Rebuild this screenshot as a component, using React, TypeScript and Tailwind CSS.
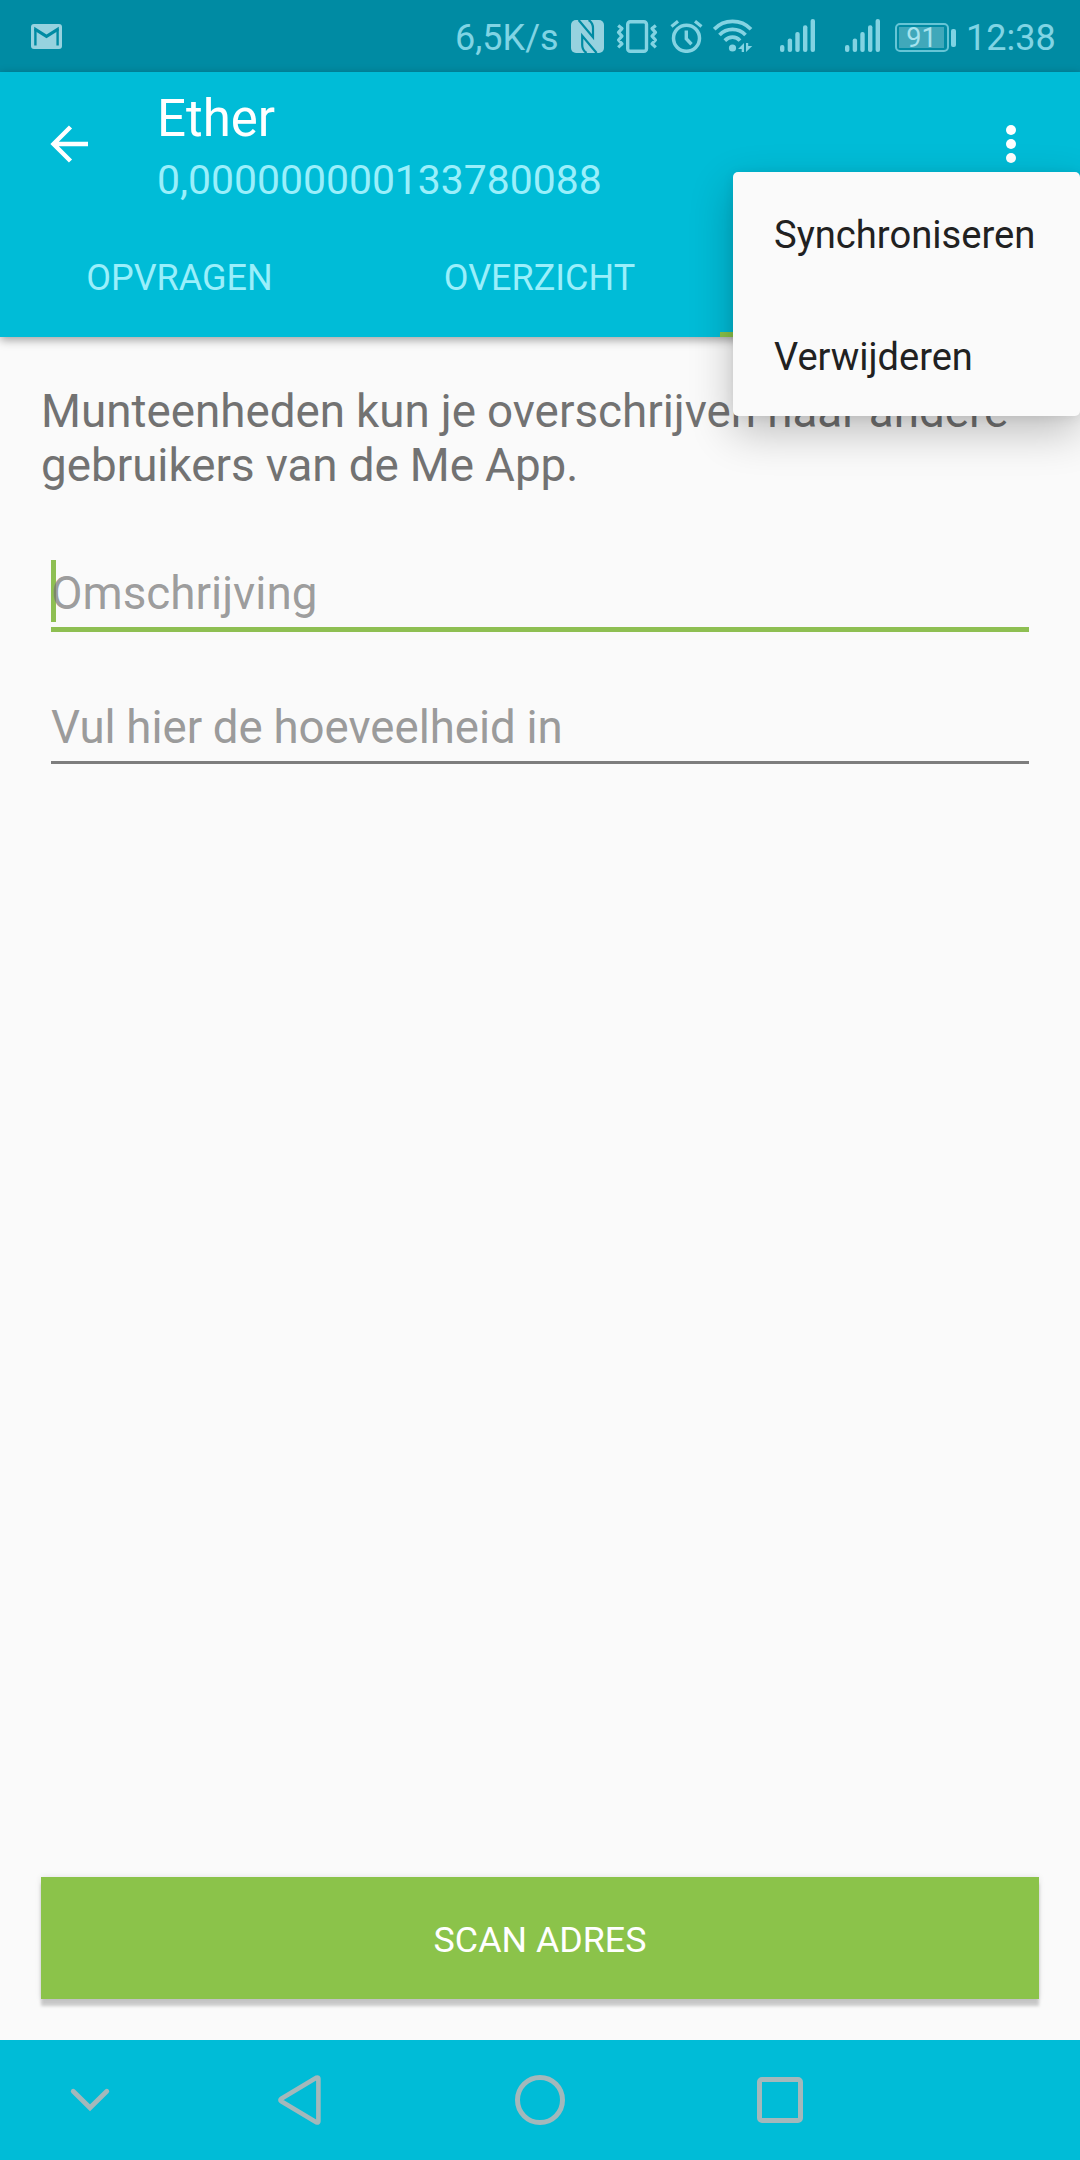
import React from "react";

const SIGNAL_BARS = [
  { x: 0, y: 26 },
  { x: 7.7, y: 19.5 },
  { x: 15.3, y: 13 },
  { x: 23, y: 6.2 },
  { x: 30.6, y: 0 },
];

function MailIcon() {
  return (
    <svg width="31" height="25" viewBox="0 0 31 25" className="shrink-0">
      <rect width="31" height="25" rx="3" fill="#96d2df" />
      <path d="M4.4 21.5V5M26.6 5V21.5" fill="none" stroke="#008ba3" strokeWidth="2.4" />
      <path d="M3.2 2.8L15.5 10.6 27.8 2.8V6.5L15.5 14.2 3.2 6.5z" fill="#008ba3" />
    </svg>
  );
}

function NfcIcon() {
  return (
    <svg width="33" height="33" viewBox="0 0 33 33" className="shrink-0">
      <rect width="33" height="33" rx="5" fill="#96d2df" />
      <path d="M7.6 0L22 17.2V8Q22 2.8 17.6 0M25.6 33L11.2 15.8V25Q11.2 30.2 15.6 33" fill="none" stroke="#008ba3" strokeWidth="2.2" />
    </svg>
  );
}

function VibrateIcon() {
  return (
    <svg width="42" height="33" viewBox="0 0 42 33" className="shrink-0" fill="none" stroke="#83d3e2">
      <rect x="11.7" y="1.7" width="18.8" height="29.6" rx="2.6" strokeWidth="3.4" />
      <path d="M2.2 5.5L6 8.6 2.5 12.4 6 16.2 2.5 20 6 23.8 2.2 27.4M39.8 5.5L36 8.6 39.5 12.4 36 16.2 39.5 20 36 23.8 39.8 27.4" strokeWidth="3.2" strokeLinejoin="round" />
    </svg>
  );
}

function AlarmIcon() {
  return (
    <svg width="33" height="33" viewBox="0 0 33 33" className="shrink-0" fill="none" stroke="#83d3e2">
      <circle cx="16.5" cy="18.3" r="13" strokeWidth="3.5" />
      <path d="M1.5 6.6L8 1.2M31.5 6.6L25 1.2" strokeWidth="3.2" />
      <path d="M16.3 10.5V18.8L21.5 24.2" strokeWidth="3.4" />
    </svg>
  );
}

function WifiIcon() {
  return (
    <svg width="40" height="34" viewBox="0 0 40 34" className="shrink-0" fill="none" stroke="#83d3e2" strokeWidth="3.7">
      <path d="M1.2 10.2C11 -0.3 28 -0.3 38 10.2M6.5 16C13.5 8.6 25.5 8.6 32.5 16M11.8 21.6C16.2 17 23 17 27 21.6" />
      <circle cx="19.5" cy="29" r="3.6" fill="#83d3e2" stroke="none" />
      <path d="M25 30L31 24V33H28.7V30ZM33 24H35.2V27H39.3L33 33Z" fill="#83d3e2" stroke="none" />
    </svg>
  );
}

function SignalIcon() {
  return (
    <svg width="35" height="33" viewBox="0 0 35 33" className="shrink-0" fill="#83d3e2">
      {SIGNAL_BARS.map((bar) => (
        <rect key={bar.x} x={bar.x} y={bar.y} width="4.4" height={33 - bar.y} rx="2.1" />
      ))}
    </svg>
  );
}

function Battery({ level }: { level: number }) {
  return (
    <div className="flex shrink-0 items-center gap-[2px]">
      <div className="h-[29px] w-[54px] rounded-[5px] border-2 border-[#66c5d6] p-[2px]">
        <div className="flex h-full w-[45px] items-center justify-center bg-[#40a8ba] pt-[2px] text-[27px] leading-none text-[#a6e3ee]">
          {level}
        </div>
      </div>
      <div className="h-[18px] w-[5px] rounded-[2px] bg-[#7fd3e3]" />
    </div>
  );
}

function StatusBar() {
  return (
    <div className="flex h-[72px] w-full items-start bg-[#008ba3] text-[36px] leading-[42px] text-[#80d4e4]">
      <div className="ml-[31px] mt-6">
        <MailIcon />
      </div>
      <div className="ml-[393px] mt-[17px] w-[116px] whitespace-nowrap">6,5K/s</div>
      <div className="mt-5 flex">
        <NfcIcon />
        <div className="ml-3"><VibrateIcon /></div>
        <div className="ml-[12px]"><AlarmIcon /></div>
        <div className="-mt-px ml-[10px]"><WifiIcon /></div>
        <div className="-mt-px ml-[27px]"><SignalIcon /></div>
        <div className="-mt-px ml-[30px]"><SignalIcon /></div>
      </div>
      <div className="ml-[15px] mt-[23px]">
        <Battery level={91} />
      </div>
      <div className="ml-[10px] mt-[17px] whitespace-nowrap">12:38</div>
    </div>
  );
}

function AppBar() {
  return (
    <header className="relative h-[265px] bg-[#00bcd7] shadow-[0_3px_9px_rgba(0,0,0,0.36)]">
      <div className="flex h-[144px]">
        <button className="ml-[50px] mt-[53px] h-[38px] w-[39px]" aria-label="Terug">
          <svg width="39" height="38" viewBox="0 0 39 38" fill="none" stroke="#fff" strokeWidth="4.4">
            <path d="M38 19H4M20.5 2L3.5 19L20.5 36" />
          </svg>
        </button>
        <div className="ml-[68px] mt-[17px] flex-1">
          <h1 className="text-[51px] leading-[60px] text-white">Ether</h1>
          <p className="mt-[7px] text-[40.9px] leading-[48px] text-[#9aeffb]">0,000000000133780088</p>
        </div>
        <button className="mr-[64px] mt-[53px] flex h-[38px] w-[10px] flex-col justify-between" aria-label="Meer opties">
          <span className="h-[10px] w-[10px] rounded-full bg-white" />
          <span className="h-[10px] w-[10px] rounded-full bg-white" />
          <span className="h-[10px] w-[10px] rounded-full bg-white" />
        </button>
      </div>
      <nav className="grid h-[121px] grid-cols-3 text-center text-[36px] leading-[42px] text-[#9aeffb]">
        <div className="pr-px pt-[41px]">OPVRAGEN</div>
        <div className="pr-px pt-[41px]">OVERZICHT</div>
        <div className="border-b-[5px] border-[#8bc34a]" />
      </nav>
    </header>
  );
}

function OverflowMenu() {
  return (
    <div className="absolute right-0 top-[172px] h-[244px] w-[347px] rounded-[5px] bg-[#fafafa] text-[38.2px] leading-[44px] text-[#212121] shadow-[0_16px_44px_rgba(0,0,0,0.24),0_2px_12px_rgba(0,0,0,0.08)]">
      <div className="h-[122px] pl-[41px] pt-[41px]">Synchroniseren</div>
      <div className="h-[122px] pl-[41px] pt-[41px] text-[38px]">Verwijderen</div>
    </div>
  );
}

function NavigationBar() {
  return (
    <footer className="flex h-[120px] items-center bg-[#00bcd7]">
      <svg width="50" height="50" viewBox="0 0 50 50" className="ml-[65px]" fill="none" stroke="#a3b8bb" strokeWidth="4.8" strokeLinecap="round">
        <path d="M8.2 16.2L25 32.8L41.8 16.2" />
      </svg>
      <svg width="50" height="54" viewBox="0 0 50 54" className="ml-[160px]" fill="none" stroke="#a3b8bb" strokeWidth="4.6" strokeLinejoin="round">
        <path d="M6.2 25.7Q4.6 27 6.2 28.3L41.7 49.4Q43.4 50 43.4 48.2V5.8Q43.4 4 41.7 4.6Z" />
      </svg>
      <div className="ml-[190px] h-[50px] w-[50px] rounded-full border-[5px] border-[#a3b8bb]" />
      <div className="ml-[192px] h-[46px] w-[46px] rounded-[5px] border-[5px] border-[#a3b8bb]" />
    </footer>
  );
}

export default function App() {
  return (
    <div className="relative flex h-[2160px] w-[1080px] flex-col overflow-hidden bg-[#fafafa] font-['Roboto',sans-serif]">
      <StatusBar />
      <AppBar />
      <main className="flex flex-1 flex-col px-[41px] pb-[41px] pt-[48px]">
        <p className="text-[45.75px] leading-[54px] text-[#727272] [word-spacing:-0.3px]">
          Munteenheden kun je overschrijven naar andere gebruikers van de Me App.
        </p>
        <div className="mx-[10px] mt-[67px] flex h-[72px] items-start border-b-[5px] border-[#8ebf52]">
          <span className="h-[62px] w-[5px] bg-[#8ebf52]" />
          <span className="-ml-[5px] mt-[7px] text-[45.8px] leading-[54px] text-[#737373]/70">Omschrijving</span>
        </div>
        <div className="mx-[10px] mt-[62px] h-[70px] border-b-[3px] border-[#7d7d7d]">
          <span className="block pt-[7px] text-[45.6px] leading-[54px] text-[#9b9b9b] [word-spacing:-0.6px]">Vul hier de hoeveelheid in</span>
        </div>
        <button className="mt-auto h-[122px] w-full bg-[#8bc34a] pt-[3px] text-[35.8px] leading-[42px] text-white shadow-[0_7px_3px_rgba(0,0,0,0.19),0_0_6px_rgba(0,0,0,0.1)]">
          SCAN ADRES
        </button>
      </main>
      <NavigationBar />
      <OverflowMenu />
    </div>
  );
}
